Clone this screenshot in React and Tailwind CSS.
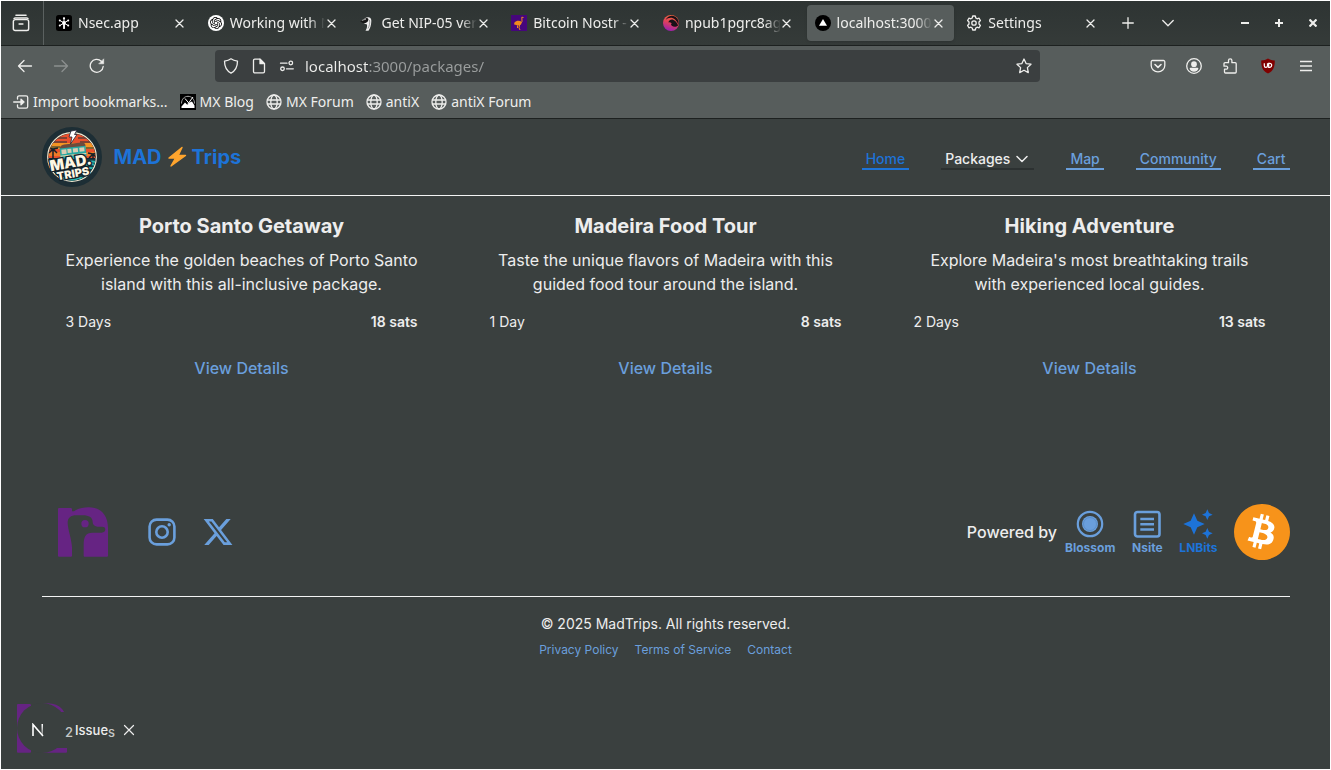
import React from "react";
import { SiOpenai, SiBitcoin } from "react-icons/si";

const stroke = { fill: "none", stroke: "currentColor", strokeWidth: 1.3, strokeLinecap: "round", strokeLinejoin: "round" };

function Icon({ children, size = "size-4", ...rest }) {
  return (
    <svg viewBox="0 0 16 16" className={`${size} shrink-0`} aria-hidden="true" {...stroke} {...rest}>
      {children}
    </svg>
  );
}

const ArchiveIcon = () => (
  <Icon size="size-[18px]">
    <path d="M3.5 1.200h9M1.800 4a1.500 1.200 0 0 1 1.200-.4h10a1.500 1.200 0 0 1 1.200.4" />
    <path d="M1.200 6.600a1.600 1.600 0 0 1 1.600-1.600h10.400a1.600 1.600 0 0 1 1.600 1.600v6.400a1.600 1.600 0 0 1-1.600 1.600H2.800a1.600 1.600 0 0 1-1.600-1.600zM6.300 8.800h3.400" />
  </Icon>
);

const CloseIcon = () => (
  <Icon size="size-[9px]" viewBox="0 0 9 9">
    <path d="M1 1l7 7M8 1l-7 7" />
  </Icon>
);

const GlobeIcon = () => (
  <Icon>
    <circle cx="8" cy="8" r="7" />
    <ellipse cx="8" cy="8" rx="3.2" ry="7" />
    <path d="M1.4 6h13.2M1.4 10h13.2" />
  </Icon>
);

const ImportIcon = () => (
  <Icon>
    <path d="M4.5 5V3.4a1.6 1.6 0 0 1 1.6-1.6h7a1.6 1.6 0 0 1 1.6 1.6v9.2a1.6 1.6 0 0 1-1.6 1.6h-7a1.6 1.6 0 0 1-1.6-1.6V11M.7 8h9" />
    <path d="M8 5.2L11 8l-3 2.8z" fill="currentColor" />
  </Icon>
);

const MxIcon = () => (
  <svg viewBox="0 0 16 16" className="size-4 shrink-0" aria-hidden="true">
    <rect width="16" height="16" fill="#000" />
    <path d="M1.500 9.500C1.500 5 4.500 2.300 8 2.300s6.500 2.700 6.500 7.200" fill="none" stroke="#aaa" strokeWidth="1" />
    <path d="M1.500 14v-1.500l3.500-4L7.500 11l2-2.500L12 7.500l2.500 4V14z" fill="#fff" />
    <path d="M5 4.500l5 6M13 3L7.500 10.500" stroke="#fff" strokeWidth="1" />
  </svg>
);

const NsecFav = () => (
  <svg viewBox="0 0 16 16" className="size-4 shrink-0" aria-hidden="true">
    <rect width="16" height="16" rx="2.5" fill="#000" />
    <g stroke="#fff" strokeWidth="1" strokeLinecap="round">
      <path d="M8 3v10.500M4 5.500l8 5M12 5.500l-8 5" />
    </g>
    <g fill="#fff">
      <circle cx="8" cy="3.300" r="1.100" />
      <circle cx="3.800" cy="5.500" r="1" />
      <circle cx="12.200" cy="5.500" r="1" />
      <circle cx="3.800" cy="10.500" r="1" />
      <circle cx="12.200" cy="10.500" r="1" />
      <circle cx="8" cy="8" r="1.900" />
      <rect x="7.200" y="8" width="1.700" height="5.800" />
    </g>
  </svg>
);

const OpenAiFav = () => (
  <span className="flex size-4 shrink-0 items-center justify-center rounded-full bg-white text-black">
    <SiOpenai className="size-3" aria-hidden="true" />
  </span>
);

const BirdFav = () => (
  <svg viewBox="0 0 16 16" className="size-4 shrink-0" aria-hidden="true">
    <path d="M3.500 6.500C5 3.500 7 2 9.500 2.200c2.500.2 3 2 2.800 4.500-.3 4-1 6.500-2.800 9H6.500c1.500-2.500 2-4.700 1.300-6.500C6 9.300 4.500 8.500 3.500 6.500z" fill="#eee" />
    <path d="M1 6.500C3.500 6 4.500 4 7.500 3c1.800-.2 2.500 1.300 1.500 3-1 1.500-2.500 2.500-4 2.200C3.500 8 2.500 7 1 6.500z" fill="#161616" />
    <path d="M3 5.500C4.500 5 5.500 4.300 7 4.300" fill="none" stroke="#bbb" strokeWidth=".8" />
    <path d="M10.500 5c.6 3 0 5.500-1.500 8.500" fill="none" stroke="#888" strokeWidth=".8" />
  </svg>
);

const OstrichFav = () => (
  <svg viewBox="0 0 16 16" className="size-4 shrink-0" aria-hidden="true">
    <rect width="16" height="16" fill="#46067c" />
    <path d="M9.500 8.500L11 6.500 10.800 2.200 12.500 2.500M8.500 10L8 12.800 9 15M6.500 10.500L6.500 13" fill="none" stroke="#f08a1c" strokeWidth="1" />
    <path d="M3.500 7.500c1.500-2 5-2.300 7-.8.5 2.300-1 4-3.500 3.800C5 10.300 4.500 9 3 9.500z" fill="#f08a1c" />
  </svg>
);

const SwirlFav = () => (
  <svg viewBox="0 0 16 16" className="size-4 shrink-0" aria-hidden="true">
    <defs>
      <linearGradient id="swirl" x1="0.700" y1="0" x2="0.400" y2="1">
        <stop offset="0" stopColor="#f4693a" />
        <stop offset=".5" stopColor="#e0425a" />
        <stop offset="1" stopColor="#9c1fb0" />
      </linearGradient>
    </defs>
    <circle cx="8" cy="8" r="8" fill="url(#swirl)" />
    <path d="M2.800 5C5 2.200 9.500 2 12 4.500c2 2 2.800 3.500 3.400 5.500.5-2.500.1-4.500-.9-6C13 1.800 10.500.6 8.300.8 5.800 1 3.700 2.500 2.800 5z" fill="#1a1118" />
    <path d="M5.300 7.500C6 5 8.500 4 10.500 5c2.500 1.200 4 3.500 4.600 5.500-1.800 1.600-4.600 1.500-6.300.3C7.800 10 7.800 8.800 8.800 8.300 7.500 7.200 6 7 5.300 7.500z" fill="#1a1118" />
  </svg>
);

const TriangleFav = () => (
  <svg viewBox="0 0 16 16" className="size-4 shrink-0" aria-hidden="true">
    <circle cx="8" cy="8" r="8" fill="#000" />
    <path d="M8 4l4 6.800H4z" fill="#fff" />
  </svg>
);

const GearFav = () => (
  <Icon>
    <path d="M6.700 1h2.600l.5 2 1.300.8 2-.6 1.300 2.300L13 7v2l1.400 1.500-1.300 2.300-2-.6-1.300.8-.5 2H6.700l-.5-2-1.300-.8-2 .6-1.300-2.300L3 9V7L1.600 5.500l1.300-2.300 2 .6L6.200 3z" />
    <circle cx="8" cy="8" r="2.200" />
  </Icon>
);

const tabs = [
  { title: "Nsec.app", Fav: NsecFav },
  { title: "Working with N", Fav: OpenAiFav },
  { title: "Get NIP-05 veri", Fav: BirdFav },
  { title: "Bitcoin Nostr -", Fav: OstrichFav },
  { title: "npub1pgrc8ag", Fav: SwirlFav },
  { title: "localhost:3000", Fav: TriangleFav, active: true },
  { title: "Settings", Fav: GearFav },
];

function TabBar() {
  return (
    <div className="flex h-[45px] border-b border-[#1d2120] bg-linear-to-b from-[#2e3433] to-[#353b39] text-[#eeeeec]">
      <button aria-label="Recent browsing" className="flex w-[43px] shrink-0 items-center justify-center border-r border-[#5b6160] pr-0.5">
        <ArchiveIcon />
      </button>
      <div role="tablist" className="flex min-w-0 flex-1 items-center pl-0.5">
        {tabs.map(({ title, Fav, active }) => (
          <div key={title} className="min-w-0 flex-1 px-0.5">
            <div className={`flex h-9 items-center rounded pr-2 pl-2 ${active ? "bg-[#575d5c] shadow-sm" : ""}`}>
              <button role="tab" aria-selected={!!active} className="flex min-w-0 flex-1 items-center gap-1.5 text-left">
                <Fav />
                <span className="min-w-0 flex-1 overflow-hidden whitespace-nowrap [mask-image:linear-gradient(to_right,#000_calc(100%_-_16px),transparent)]">
                  {title}
                </span>
              </button>
              <button aria-label={`Close ${title}`} className="-ml-0.5 flex w-4 shrink-0 items-center justify-center">
                <CloseIcon />
              </button>
            </div>
          </div>
        ))}
      </div>
      <div className="flex w-[222px] shrink-0 items-center">
        <button aria-label="New tab" className="flex w-10 justify-center">
          <Icon size="size-3" viewBox="0 0 12 12"><path d="M6 .7v10.600M.7 6h10.600" /></Icon>
        </button>
        <button aria-label="List all tabs" className="flex w-10 justify-center">
          <Icon size="size-3" viewBox="0 0 12 12"><path d="M.8 3.500L6 8.700l5.200-5.200" /></Icon>
        </button>
        <div className="ml-auto flex">
          <button aria-label="Minimize" className="flex w-[34px] justify-center">
            <Icon size="size-2" viewBox="0 0 8 8" strokeWidth="2" strokeLinecap="butt"><path d="M0 4h8" /></Icon>
          </button>
          <button aria-label="Maximize" className="flex w-[34px] justify-center">
            <Icon size="size-2" viewBox="0 0 8 8" strokeWidth="2" strokeLinecap="butt"><path d="M0 4h8M4 0v8" /></Icon>
          </button>
          <button aria-label="Close window" className="flex w-[34px] justify-center">
            <Icon size="size-2" viewBox="0 0 8 8" strokeWidth="2.200" strokeLinecap="butt"><path d="M.5.5l7 7M7.500.5l-7 7" /></Icon>
          </button>
        </div>
      </div>
    </div>
  );
}

function ToolButton({ label, children, className = "" }) {
  return (
    <button aria-label={label} className={`flex h-8 w-9 shrink-0 items-center justify-center ${className}`}>
      {children}
    </button>
  );
}

function Toolbar() {
  return (
    <div className="flex h-10 items-center px-1.5">
      <ToolButton label="Back"><Icon><path d="M14.500 8h-13M7 2.500L1.500 8 7 13.500" /></Icon></ToolButton>
      <ToolButton label="Forward" className="text-[#8c908f]"><Icon><path d="M1.500 8h13M9 2.500L14.500 8 9 13.500" /></Icon></ToolButton>
      <ToolButton label="Reload">
        <Icon>
          <path d="M14.200 8.500A6.500 6.500 0 1 1 12.300 3.200" />
          <path d="M14.700 1.200v4.600h-4.600z" fill="currentColor" strokeWidth=".6" />
        </Icon>
      </ToolButton>
      <div className="mx-[100px] flex h-8 flex-1 items-center rounded bg-[#3b3f40] px-2">
        <Icon><path d="M8 .8c1.800 1.400 3.800 2 6.500 2.300 0 5.500-1.500 9.500-6.500 12.100C3 12.600 1.500 8.600 1.500 3.100 4.200 2.800 6.200 2.200 8 .8z" /></Icon>
        <Icon size="ml-3 size-4">
          <path d="M2.500 2.500A1.300 1.300 0 0 1 3.800 1.200H9l4.500 4.500v7.800a1.300 1.300 0 0 1-1.300 1.300H3.800a1.300 1.300 0 0 1-1.300-1.300z" />
          <path d="M9 1.200v4.500h4.500z" fill="currentColor" />
        </Icon>
        <Icon size="ml-3 size-4">
          <path d="M1.500 5.200h6.500M7.500 10.800h6.800" />
          <circle cx="11.800" cy="5" r="1.800" />
          <circle cx="3.500" cy="10.800" r="1.800" />
        </Icon>
        <input
          aria-label="Address"
          defaultValue="localhost:3000/packages/"
          className="ml-2.5 min-w-0 flex-1 bg-[linear-gradient(to_right,#eeeeec_63px,#9b9e9e_63px)] bg-clip-text text-[15px] leading-6 text-transparent outline-none"
        />
        <button aria-label="Bookmark this page">
          <Icon><path d="M8 1l2.100 4.600 4.900.6-3.600 3.400.9 5L8 12.200l-4.300 2.400.9-5L1 6.200l4.900-.6z" /></Icon>
        </button>
      </div>
      <ToolButton label="Pocket">
        <Icon>
          <path d="M2.500 2.500h11A1.300 1.300 0 0 1 14.800 3.800V7.500a6.800 6.300 0 0 1-13.600 0V3.800A1.300 1.300 0 0 1 2.500 2.500z" />
          <path d="M5 6.500l3 2.800 3-2.800" strokeWidth="1.600" />
        </Icon>
      </ToolButton>
      <ToolButton label="Account">
        <Icon>
          <circle cx="8" cy="8" r="7.300" />
          <circle cx="8" cy="6.200" r="2.200" fill="currentColor" />
          <path d="M4.300 10.500h7.400c-.5 1.500-2 2.500-3.700 2.500s-3.200-1-3.700-2.500z" fill="currentColor" />
        </Icon>
      </ToolButton>
      <ToolButton label="Extensions">
        <Icon>
          <path d="M6.500 4.700V2.500a1.700 1.700 0 0 1 3.400 0v2.200h3.300a1 1 0 0 1 1 1V14a1 1 0 0 1-1 1H3.500a1 1 0 0 1-1-1v-2.800h1.700a1.500 1.500 0 0 0 0-3H2V5.700a1 1 0 0 1 1-1z" />
        </Icon>
      </ToolButton>
      <ToolButton label="uBlock Origin" className="ml-0.5">
        <svg viewBox="0 0 16 16" className="size-4" aria-hidden="true">
          <path d="M8 .5c2 1.300 4 1.900 6.800 2C14.800 9 13.500 13 8 15.600 2.500 13 1.200 9 1.200 2.500 4 2.400 6 1.800 8 .5z" fill="#800000" />
          <path d="M4.300 5.300v2.400a1.600 1.600 0 0 0 3.200 0V5.300M8.700 5.300v4h1a2 2 0 0 0 0-4z" fill="none" stroke="#fff" strokeWidth="1.200" />
        </svg>
      </ToolButton>
      <ToolButton label="Menu" className="ml-0.5"><Icon size="size-3" viewBox="0 0 12 12" strokeLinecap="butt"><path d="M0 1.500h12M0 6h12M0 10.500h12" /></Icon></ToolButton>
    </div>
  );
}

const bookmarks = [
  { label: "Import bookmarks...", Mark: ImportIcon },
  { label: "MX Blog", Mark: MxIcon },
  { label: "MX Forum", Mark: GlobeIcon },
  { label: "antiX", Mark: GlobeIcon },
  { label: "antiX Forum", Mark: GlobeIcon },
];

function Bookmarks() {
  return (
    <nav aria-label="Bookmarks" className="flex h-8 items-center gap-3 pl-3">
      {bookmarks.map(({ label, Mark }) => (
        <a key={label} href="#" className="flex items-center gap-1 whitespace-nowrap">
          <Mark />
          {label}
        </a>
      ))}
    </nav>
  );
}

function BrandBadge() {
  return (
    <svg viewBox="0 0 60 60" className="size-[60px]" role="img" aria-label="Mad Trips">
      <defs>
        <clipPath id="badge-disc"><circle cx="30" cy="30" r="23.500" /></clipPath>
      </defs>
      <circle cx="30" cy="30" r="30" fill="#1d2e35" />
      <circle cx="30" cy="30" r="24.300" fill="#142a33" stroke="#f3ead2" strokeWidth="1.200" />
      <g clipPath="url(#badge-disc)">
        <rect x="5" y="5" width="50" height="26" fill="#e9502d" />
        <path d="M5 19h50" stroke="#f59422" strokeWidth="6" />
        <path d="M5 27h50" stroke="#ef7a28" strokeWidth="4" />
        <path d="M14 11h11M36 11h10M8 15h17M38 15h15M6 20h12M44 21h12" stroke="#16323b" strokeWidth="1.200" />
        <path d="M11 36V22M11 22l-5-1M11 22l5-1M11 22l-4 4M11 22l4 4M51 37V27M51 27l-5-1M51 27l4-1M51 27l-4 4M51 27l4 4" stroke="#172228" strokeWidth="1.500" />
        <rect x="5" y="32" width="50" height="24" fill="#123a45" />
        <path d="M5 36q5-3 10 0t10 0 10 0 10 0 10 0M5 42q4-2 8 0M12 48q4-3 8 0M18 52q4-2 8 0t8 0 8 0M44 38q4-2 9 0M44 42q4-2 9 0M45 47q3-2 7 0" fill="none" stroke="#2bb3ab" strokeWidth="2" />
        <g transform="rotate(-6 31 24)">
          <rect x="18" y="18" width="26" height="14" rx="3" fill="#27a7a2" />
          <path d="M18 20q1-3.500 5-3.500h17q4 0 4 3.500z" fill="#6f4a3c" />
          <path d="M19.500 21.500h5v4.500h-5zM25.500 21.500h4v4h-4zM31 21.500h5v4h-5zM37.500 21.500h5v4h-5z" fill="#d9cdb4" />
          <path d="M18 28h26" stroke="#ecd8ae" />
          <circle cx="24" cy="32" r="2.500" fill="#152127" />
          <circle cx="39" cy="32" r="2.500" fill="#152127" />
        </g>
      </g>
      <path d="M29 4l6-1-2.500 4.500h2.500l-6.500 9.500 1.500-7h-3z" fill="#fff" stroke="#223" strokeWidth=".8" />
      <g transform="rotate(-10 30 38)" fill="#fdf6e3" stroke="#132028" strokeWidth="2.500" paintOrder="stroke" fontFamily="Inter, sans-serif" fontWeight="900" textAnchor="middle">
        <text x="29.500" y="50.500" fontSize="11">TRIPS</text>
        <text x="29" y="40.500" fontSize="15">MAD.</text>
      </g>
    </svg>
  );
}

const navLink = "border-b-2 px-1 pt-1.5";

function SiteHeader() {
  return (
    <header className="border-b border-[#f3f4f4]">
      <div className="mx-auto flex max-w-7xl items-center justify-between px-4 py-2">
        <a href="#" className="flex items-center gap-3 text-xl font-bold text-[#1d73d8]">
          <BrandBadge />
          <span className="flex items-center gap-1">
            MAD
            <svg viewBox="0 0 22 24" className="h-6 w-[22px]" role="img" aria-label="lightning">
              <path d="M16 2.500L3 13h6.500L5 21 19.500 10.500h-7.300z" fill="#ffa52e" stroke="#ffa52e" strokeWidth="1.400" strokeLinejoin="round" />
            </svg>
            Trips
          </span>
        </a>
        <nav aria-label="Main" className="flex gap-8 text-sm leading-[18px] font-medium text-[#6a9fdc]">
          <a href="#" className={`${navLink} border-[#1d73d8] text-[#1d73d8]`}>Home</a>
          <button className={`${navLink} flex items-center gap-1 border-[#2c3131] text-[#ededed]`}>
            Packages
            <svg viewBox="0 0 16 16" className="size-4" aria-hidden="true" {...stroke} strokeWidth="1.500"><path d="M3 5.500l5 5 5-5" /></svg>
          </button>
          <a href="#" className={`${navLink} border-[#6a9fdc]`}>Map</a>
          <a href="#" className={`${navLink} border-[#6a9fdc]`}>Community</a>
          <a href="#" className={`${navLink} border-[#6a9fdc]`}>Cart</a>
        </nav>
      </div>
    </header>
  );
}

const packages = [
  { name: "Porto Santo Getaway", text: "Experience the golden beaches of Porto Santo island with this all-inclusive package.", days: "3 Days", price: "18 sats" },
  { name: "Madeira Food Tour", text: "Taste the unique flavors of Madeira with this guided food tour around the island.", days: "1 Day", price: "8 sats" },
  { name: "Hiking Adventure", text: "Explore Madeira's most breathtaking trails with experienced local guides.", days: "2 Days", price: "13 sats" },
];

function PackageCard({ name, text, days, price }) {
  return (
    <article className="px-6 text-center">
      <h2 className="mb-2 text-xl font-bold">{name}</h2>
      <p className="mb-4">{text}</p>
      <div className="mb-6 flex justify-between text-sm">
        <span>{days}</span>
        <span className="font-semibold">{price}</span>
      </div>
      <a href="#" className="font-medium text-[#6a9fdc]">View Details</a>
    </article>
  );
}

function NostrLogo() {
  return (
    <svg viewBox="0 0 150 148" className="size-[50px]" role="img" aria-label="Nostr">
      <path
        fill="#662483"
        d="M3 2H38Q42 2 42 6V12H48C58 4 75 0 92 0 130 0 150 25 150 62V145Q150 148 147 148H80Q77 148 77 145V115C77 88 82 76 104 76H131C138 76 142 72 142 66 142 60 138 58 132 58H118C108 56 104 51 104 44 104 30 92 24 75 24H55C38 24 29 32 29 46 29 65 41 95 42 120V145Q42 148 39 148H3Q0 148 0 145V5Q0 2 3 2Z"
      />
      <circle cx="81" cy="49" r="11" fill="#662483" />
    </svg>
  );
}

function PoweredLink({ label, className = "", children }) {
  return (
    <a href="#" className={`flex flex-col items-center text-xs font-bold ${className}`}>
      <svg viewBox="0 0 32 32" className="size-8" aria-hidden="true">{children}</svg>
      {label}
    </a>
  );
}

function SiteFooter() {
  return (
    <footer className="mx-auto mt-[124px] w-full max-w-7xl px-4">
      <div className="flex items-center justify-between border-b border-[#f3f4f4] pb-9">
        <div className="flex items-center pl-4 text-[#6a9fdc]">
          <a href="#"><NostrLogo /></a>
          <a href="#" aria-label="Instagram" className="ml-[38px]">
            <svg viewBox="0 0 32 32" className="size-8" fill="none" stroke="currentColor" strokeWidth="2.600" aria-hidden="true">
              <rect x="3.600" y="3.600" width="24.800" height="24.800" rx="7" />
              <circle cx="16" cy="16" r="5.700" />
              <circle cx="23.200" cy="8.800" r="1.700" fill="currentColor" stroke="none" />
            </svg>
          </a>
          <a href="#" aria-label="X" className="ml-6">
            <svg viewBox="0 0 24 24" className="size-8" fill="currentColor" aria-hidden="true">
              <path d="M18.244 2.250h3.308l-7.227 8.260 8.502 11.240H16.170l-5.214-6.817L4.990 21.750H1.680l7.730-8.835L1.254 2.250H8.080l4.713 6.231zm-1.161 17.520h1.833L7.084 4.126H5.117z" />
            </svg>
          </a>
        </div>
        <div className="flex items-center gap-4 text-[#6a9fdc]">
          <div className="flex items-center gap-2">
            <span className="font-medium text-[#ededed]">Powered by</span>
            <PoweredLink label="Blossom">
              <circle cx="16" cy="16" r="12.200" fill="none" stroke="currentColor" strokeWidth="2.200" />
              <circle cx="16" cy="16" r="8" fill="currentColor" />
              <circle cx="16" cy="16" r="6.500" fill="none" stroke="#4f7fb5" strokeWidth=".5" />
            </PoweredLink>
          </div>
          <PoweredLink label="Nsite">
            <rect x="4" y="4" width="24.500" height="24.500" rx="2.500" fill="none" stroke="currentColor" strokeWidth="2.600" />
            <path d="M9.300 11h13.700M9.300 16.200h13.700M9.300 21.500h13.700" stroke="currentColor" strokeWidth="2.400" />
          </PoweredLink>
          <PoweredLink label="LNBits" className="text-[#1d73d8]">
            <g transform="scale(1.333)" fill="currentColor">
              <path d="M19 9l1.250-2.750L23 5l-2.750-1.250L19 1l-1.250 2.750L15 5l2.750 1.250L19 9zM11.500 9.500L9 4 6.500 9.500 1 12l5.500 2.500L9 20l2.500-5.500L17 12l-5.500-2.500zM19 15l-1.250 2.750L15 19l2.750 1.250L19 23l1.250-2.750L23 19l-2.750-1.250L19 15z" />
            </g>
          </PoweredLink>
          <a href="#" aria-label="Bitcoin" className="rounded-full bg-[radial-gradient(circle,#fff_60%,transparent_60%)]">
            <SiBitcoin className="size-14 text-[#f7931a]" aria-hidden="true" />
          </a>
        </div>
      </div>
      <div className="flex flex-col items-center gap-2 pt-[17px] pb-4">
        <p className="text-sm">© 2025 MadTrips. All rights reserved.</p>
        <nav aria-label="Legal" className="flex gap-4 text-xs text-[#6a9fdc]">
          <a href="#">Privacy Policy</a>
          <a href="#">Terms of Service</a>
          <a href="#">Contact</a>
        </nav>
      </div>
    </footer>
  );
}

function DevBadge() {
  return (
    <div className="absolute bottom-4 left-4">
      <NostrLogo />
      <div className="absolute top-0 left-0 flex items-center">
        <button aria-label="Open Next.js dev tools" className="flex size-[50px] shrink-0 items-center justify-center rounded-full bg-[#3a403f] pr-2">
          <svg viewBox="0 0 14 14" className="mt-1 size-3.5" aria-hidden="true">
            <defs>
              <linearGradient id="n-fade" x1="0" y1="0" x2="0" y2="1">
                <stop offset="0" stopColor="#fff" />
                <stop offset="1" stopColor="#fff" stopOpacity=".35" />
              </linearGradient>
            </defs>
            <path d="M2 13V1.500L12 13" fill="none" stroke="#fff" strokeWidth="1.600" />
            <rect x="10.500" y="1" width="1.500" height="11" fill="url(#n-fade)" />
          </svg>
        </button>
        <div className="mt-1 -ml-4 flex h-9 items-center gap-2 bg-[#3a403f] pl-3.5">
          <button className="flex items-center gap-0.5 text-[13px] leading-5 font-medium">
            <span className="pt-1 text-[#c4c7c6]">2</span>
            <span className="flex items-center">
              Issue<span className="pt-1 text-[#c4c7c6]">s</span>
            </span>
          </button>
          <button aria-label="Dismiss issues">
            <Icon size="size-3" viewBox="0 0 12 12" strokeWidth="1.200"><path d="M1.500 1.500l9 9M10.500 1.500l-9 9" /></Icon>
          </button>
        </div>
      </div>
    </div>
  );
}

export default function App() {
  return (
    <div className="flex min-h-screen flex-col bg-white p-px">
      <div className="bg-[#575d5c] font-['Noto_Sans',sans-serif] text-sm text-[#eeeeec]">
        <TabBar />
        <Toolbar />
        <div className="border-b border-[#1d2120]">
          <Bookmarks />
        </div>
      </div>
      <div className="relative flex flex-1 flex-col bg-[#3a403f] font-['Inter',sans-serif] text-[#ededed]">
        <SiteHeader />
        <main className="mx-auto grid w-full max-w-7xl grid-cols-3 gap-6 px-4 pt-4">
          {packages.map((p) => (
            <PackageCard key={p.name} {...p} />
          ))}
        </main>
        <SiteFooter />
        <DevBadge />
      </div>
    </div>
  );
}
